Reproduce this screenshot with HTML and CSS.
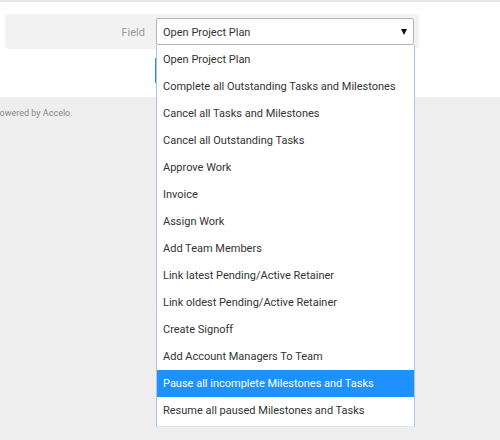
FILE: index.html
```html
<!DOCTYPE html>
<html>
<head>
<meta charset="utf-8">
<link rel="stylesheet" href="styles.css">
</head>
<body>
<div class="header">
  <div class="panel">
    <span class="label">Field</span>
    <div class="select">
      <span class="value">Open Project Plan</span>
      <span class="arrow"></span>
    </div>
  </div>
  <div class="actions"><span class="btn"></span></div>
</div>
<div class="footer">Powered by Accelo.</div>
<ul class="menu">
  <li>Open Project Plan</li>
  <li>Complete all Outstanding Tasks and Milestones</li>
  <li>Cancel all Tasks and Milestones</li>
  <li>Cancel all Outstanding Tasks</li>
  <li>Approve Work</li>
  <li>Invoice</li>
  <li>Assign Work</li>
  <li>Add Team Members</li>
  <li>Link latest Pending/Active Retainer</li>
  <li>Link oldest Pending/Active Retainer</li>
  <li>Create Signoff</li>
  <li>Add Account Managers To Team</li>
  <li class="active">Pause all incomplete Milestones and Tasks</li>
  <li>Resume all paused Milestones and Tasks</li>
</ul>
</body>
</html>
```
FILE: styles.css
```css
html, body {
  margin: 0;
  padding: 0;
}
body {
  background: #eeeeee;
  font-family: Roboto, "Liberation Sans", Arial, sans-serif;
  font-size: 11px;
  color: #333;
  width: 500px;
  height: 440px;
  overflow: hidden;
  position: relative;
}
.header {
  background: #fff;
  border-top: 2px solid #e6e6e6;
  height: 97px;
  box-sizing: border-box;
  padding-top: 12px;
}
.panel {
  margin-left: 5px;
  width: 414px;
  height: 35px;
  background: #f2f2f2;
  border-radius: 4px;
  display: flex;
  align-items: center;
  box-sizing: border-box;
}
.label {
  width: 140px;
  text-align: right;
  color: #999;
  margin-right: 11px;
  padding-top: 1px;
}
.select {
  width: 258px;
  height: 27px;
  box-sizing: border-box;
  border: 1px solid #b5b5b5;
  border-radius: 2px;
  background: #fff;
  display: flex;
  align-items: center;
  justify-content: space-between;
  padding: 1px 6px 0 6px;
}
.value {
  color: #333;
}
.arrow {
  width: 0;
  height: 0;
  border-left: 3.5px solid transparent;
  border-right: 3.5px solid transparent;
  border-top: 6px solid #111;
}
.actions {
  padding-left: 155px;
  padding-top: 9px;
}
.btn {
  display: block;
  width: 60px;
  height: 25px;
  background: #2f8fd8;
}
.footer {
  font-size: 9px;
  color: #888;
  padding-top: 11px;
  margin-left: -6px;
}
.menu {
  position: absolute;
  left: 156px;
  top: 45px;
  width: 259px;
  margin: 0;
  padding: 1px 0 2px 0;
  list-style: none;
  background: #fff;
  border-left: 1px solid #a9c4ee;
  border-right: 1px solid #a9c4ee;
  border-bottom: 1px solid #dde6f3;
  box-sizing: border-box;
}
.menu li {
  height: 27px;
  line-height: 26px;
  padding-top: 1px;
  box-sizing: border-box;
  padding-left: 6px;
  color: #333;
  white-space: nowrap;
}
.menu li.active {
  background: #1e90ff;
  color: #fff;
}
```
